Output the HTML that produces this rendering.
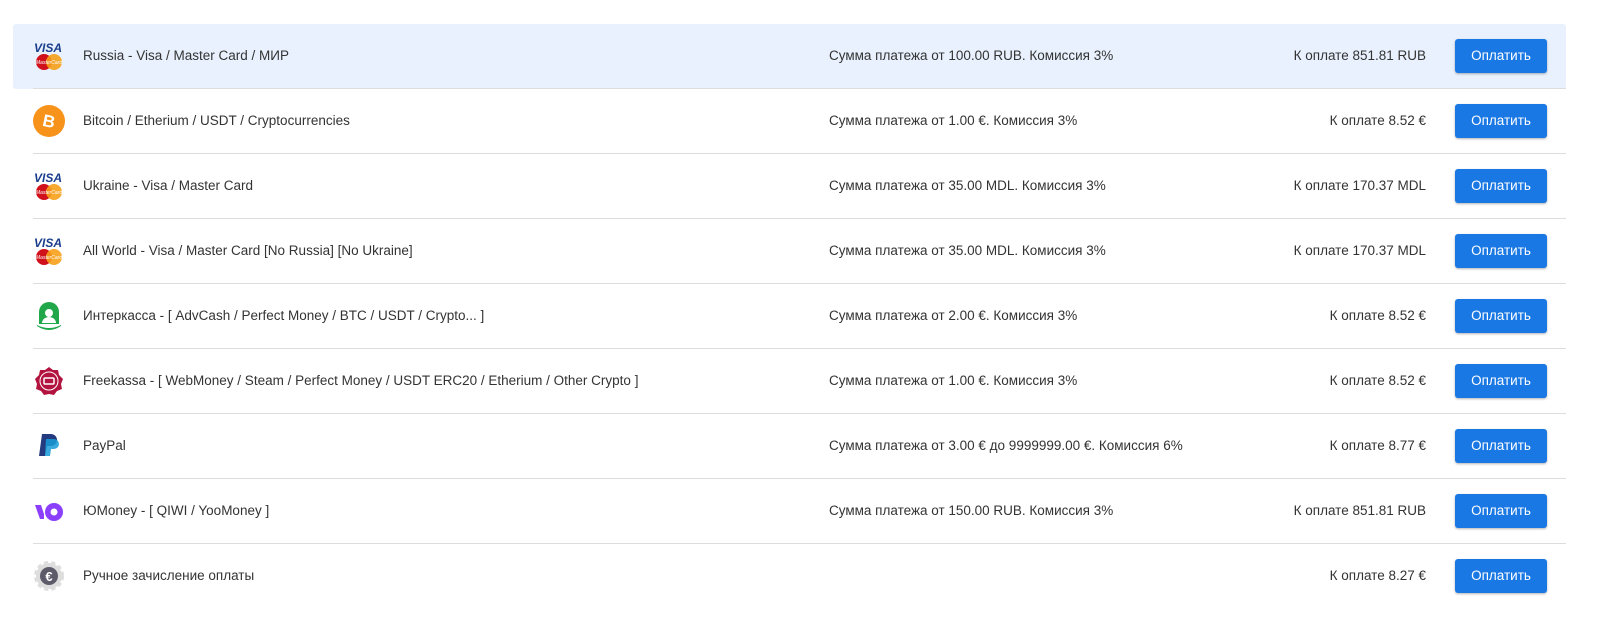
<!DOCTYPE html>
<html><head><meta charset="utf-8"><style>
body{margin:0;background:#fff;font-family:"Liberation Sans",sans-serif;color:#333;font-size:13.5px;}
.wrap{position:absolute;left:13px;top:24px;width:1553px;}
.row{position:relative;height:65px;}
.row.hl{background:#e8f1fd;border-radius:3px;}
.row:after{content:"";position:absolute;left:20px;right:0;bottom:0;height:1px;background:#ddd;}
.row:last-child:after{display:none}
.ic{position:absolute;left:20px;top:16px;width:32px;height:32px;}
.n{position:absolute;left:70px;top:24px;}
.m{position:absolute;left:816px;top:24px;}
.p{position:absolute;right:140px;top:24px;}
.b{position:absolute;left:1442px;top:15px;width:92px;height:34px;background:#1a78e4;color:#fff;border-radius:3px;text-align:center;line-height:34px;font-size:13.5px;box-shadow:0 1px 2px rgba(0,0,0,.3);}
</style></head><body><div class="wrap">
<svg width="0" height="0" style="position:absolute"><defs>
<g id="visa"><text x="1" y="12" font-family="Liberation Sans" font-weight="bold" font-style="italic" font-size="12" fill="#1a3e8c">VISA</text><circle cx="11" cy="22" r="8" fill="#d0101a"/><circle cx="21" cy="22" r="8" fill="#f6a01a" opacity=".9"/><text x="3" y="24" font-size="5" fill="#fff" font-style="italic">MasterCard</text></g>
</defs></svg>

<div class="row hl"><svg class="ic" viewBox="0 0 32 32"><use href="#visa"/></svg><span class="n">Russia - Visa / Master Card / МИР</span><span class="m">Сумма платежа от 100.00 RUB. Комиссия 3%</span><span class="p">К оплате 851.81 RUB</span><div class="b">Оплатить</div></div>

<div class="row"><svg class="ic" viewBox="0 0 32 32"><circle cx="16" cy="16" r="16" fill="#f7931a"/><text x="16" y="22" text-anchor="middle" font-family="Liberation Sans" font-weight="bold" font-size="17" fill="#fff" transform="rotate(12 16 16)">B</text></svg><span class="n">Bitcoin / Etherium / USDT / Cryptocurrencies</span><span class="m">Сумма платежа от 1.00 €. Комиссия 3%</span><span class="p">К оплате 8.52 €</span><div class="b">Оплатить</div></div>

<div class="row"><svg class="ic" viewBox="0 0 32 32"><use href="#visa"/></svg><span class="n">Ukraine - Visa / Master Card</span><span class="m">Сумма платежа от 35.00 MDL. Комиссия 3%</span><span class="p">К оплате 170.37 MDL</span><div class="b">Оплатить</div></div>

<div class="row"><svg class="ic" viewBox="0 0 32 32"><use href="#visa"/></svg><span class="n">All World - Visa / Master Card [No Russia] [No Ukraine]</span><span class="m">Сумма платежа от 35.00 MDL. Комиссия 3%</span><span class="p">К оплате 170.37 MDL</span><div class="b">Оплатить</div></div>

<div class="row"><svg class="ic" viewBox="0 0 32 32"><path d="M6 24V12a10 10 0 0 1 20 0v12z" fill="#1fa74a"/><circle cx="16" cy="13" r="4" fill="#fff"/><path d="M9 23a7 6 0 0 1 14 0z" fill="#fff"/><path d="M4 26q12 8 24 0v-1q-12 6-24 0z" fill="#1fa74a"/></svg><span class="n">Интеркасса - [ AdvCash / Perfect Money / BTC / USDT / Crypto... ]</span><span class="m">Сумма платежа от 2.00 €. Комиссия 3%</span><span class="p">К оплате 8.52 €</span><div class="b">Оплатить</div></div>

<div class="row"><svg class="ic" viewBox="0 0 32 32"><path d="M16 2l4 3 5 0 1 5 4 4-2 5 1 5-5 2-3 4-5-1-5 1-3-4-5-2 1-5-2-5 4-4 1-5 5 0z" fill="#b3143f"/><circle cx="16" cy="16" r="9" fill="none" stroke="#fff" stroke-width="1"/><rect x="11" y="13" width="10" height="6" rx="1" fill="none" stroke="#fff" stroke-width="1.5"/></svg><span class="n">Freekassa - [ WebMoney / Steam / Perfect Money / USDT ERC20 / Etherium / Other Crypto ]</span><span class="m">Сумма платежа от 1.00 €. Комиссия 3%</span><span class="p">К оплате 8.52 €</span><div class="b">Оплатить</div></div>

<div class="row"><svg class="ic" viewBox="0 0 32 32"><path d="M9 4h9a6 6 0 0 1 0 12h-4l-2 10H6z" fill="#253b80"/><path d="M13 9h8a5 5 0 0 1 0 10h-3l-1 7h-5z" fill="#179bd7" opacity=".85"/></svg><span class="n">PayPal</span><span class="m">Сумма платежа от 3.00 € до 9999999.00 €. Комиссия 6%</span><span class="p">К оплате 8.77 €</span><div class="b">Оплатить</div></div>

<div class="row"><svg class="ic" viewBox="0 0 32 32"><path d="M2 10h6l3 9v5H7z" fill="#8b3ffd"/><circle cx="21" cy="17" r="9" fill="#8b3ffd"/><circle cx="21" cy="17" r="3.5" fill="#fff"/></svg><span class="n">ЮMoney - [ QIWI / YooMoney ]</span><span class="m">Сумма платежа от 150.00 RUB. Комиссия 3%</span><span class="p">К оплате 851.81 RUB</span><div class="b">Оплатить</div></div>

<div class="row"><svg class="ic" viewBox="0 0 32 32"><circle cx="16" cy="16" r="13" fill="#ddd" stroke="#ddd" stroke-width="4" stroke-dasharray="4 3"/><circle cx="16" cy="16" r="9" fill="#5d5a6a"/><text x="16" y="21" text-anchor="middle" font-family="Liberation Sans" font-weight="bold" font-size="13" fill="#fff">€</text></svg><span class="n">Ручное зачисление оплаты</span><span class="p">К оплате 8.27 €</span><div class="b">Оплатить</div></div>
</div></body></html>
